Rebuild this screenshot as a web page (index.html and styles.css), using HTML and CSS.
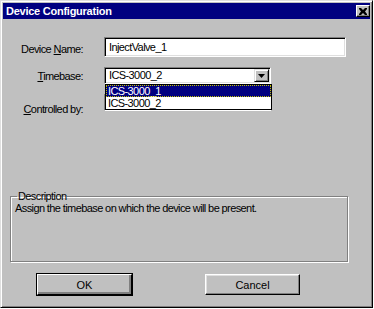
FILE: index.html
```html
<!DOCTYPE html>
<html lang="en">
<head>
    <meta charset="UTF-8">
    <title>Device Configuration</title>
    <link rel="stylesheet" href="styles.css">
</head>
<body>
<div class="window">
    <div class="titlebar">
        <span class="title">Device Configuration</span>
        <span class="close">
            <svg width="8" height="7" viewBox="0 0 8 7"><path d="M0 0h2l2 2 2-2h2v1L6 3.5 8 6v1H6L4 5 2 7H0V6l2-2.5L0 1z" fill="#000"/></svg>
        </span>
    </div>
    <div class="content">
        <div class="form">
            <div class="row">
                <label class="lbl lbl-name">Device <u>N</u>ame:</label>
                <div class="edit wide">InjectValve_1</div>
            </div>
            <div class="row">
                <label class="lbl lbl-time"><u>T</u>imebase:</label>
                <div class="combo">
                    <div class="combo-text">ICS-3000_2</div>
                    <span class="arrow"><svg width="7" height="4" viewBox="0 0 7 4"><path d="M0 0h7L3.5 4z" fill="#000"/></svg></span>
                    <ul class="droplist">
                        <li class="sel">ICS-3000_1</li>
                        <li>ICS-3000_2</li>
                    </ul>
                </div>
            </div>
            <div class="row">
                <label class="lbl lbl-ctrl"><u>C</u>ontrolled by:</label>
                <div class="combo">
                    <div class="combo-text"></div>
                    <span class="arrow"><svg width="7" height="4" viewBox="0 0 7 4"><path d="M0 0h7L3.5 4z" fill="#000"/></svg></span>
                </div>
            </div>
        </div>
        <fieldset class="desc">
            <legend>Description</legend>
            <p>Assign the timebase on which the device will be present.</p>
        </fieldset>
        <div class="buttons">
            <button class="btn default" type="button">OK</button>
            <button class="btn" type="button">Cancel</button>
        </div>
    </div>
</div>
</body>
</html>
```

FILE: styles.css
```css
body {
    margin: 0;
    font-family: "Liberation Sans", Arial, sans-serif;
    font-size: 11px;
    letter-spacing: -0.6px;
    color: #000;
}

.window {
    box-sizing: border-box;
    width: 373px;
    height: 308px;
    padding: 2px;
    background: #c0c0c0;
    border: 1px solid;
    border-color: #dfdfdf #000 #000 #dfdfdf;
    box-shadow: inset 1px 1px #fff, inset -1px -1px #808080;
    display: flex;
    flex-direction: column;
}

.titlebar {
    height: 16px;
    padding: 0 0 0 3px;
    background: #000080;
    color: #fff;
    display: flex;
    align-items: center;
    justify-content: space-between;
}

.title {
    font-weight: bold;
    letter-spacing: -0.25px;
}

.close {
    box-sizing: border-box;
    width: 14px;
    height: 12px;
    background: #c0c0c0;
    border: 1px solid;
    border-color: #fff #000 #000 #fff;
    box-shadow: inset -1px -1px #808080;
    display: flex;
    align-items: center;
    justify-content: center;
}

.content {
    flex: 1;
    padding: 18px 0 0 7px;
    display: flex;
    flex-direction: column;
}

.form {
    display: flex;
    flex-direction: column;
    gap: 10px;
}

.row {
    display: flex;
    align-items: flex-start;
}

.lbl {
    width: 73px;
    margin-right: 21px;
    line-height: 13px;
    text-align: right;
}

.lbl-name {
    margin-top: 6px;
}

.lbl-time {
    margin-top: 3px;
}

.lbl-ctrl {
    margin-top: 9px;
}

.edit,
.combo {
    box-sizing: border-box;
    height: 20px;
    background: #fff;
    border: 1px solid;
    border-color: #808080 #fff #fff #808080;
    box-shadow: inset 1px 1px #000, inset -1px -1px #dfdfdf;
}

.edit {
    padding: 3px 4px;
    line-height: 13px;
}

.wide {
    width: 242px;
}

.combo {
    width: 167px;
    height: 17px;
    position: relative;
    display: flex;
}

.combo-text {
    flex: 1;
    padding: 1px 4px;
    line-height: 13px;
}

.arrow {
    box-sizing: border-box;
    width: 15px;
    height: 13px;
    margin: 1px 1px 0 0;
    background: #c0c0c0;
    border: 1px solid;
    border-color: #dfdfdf #000 #000 #dfdfdf;
    box-shadow: inset 1px 1px #fff, inset -1px -1px #808080;
    display: flex;
    align-items: center;
    justify-content: center;
}

.droplist {
    position: absolute;
    top: 16px;
    left: 0;
    z-index: 2;
    box-sizing: border-box;
    width: 167px;
    margin: 0;
    padding: 0;
    list-style: none;
    background: #fff;
    border: 1px solid #000;
}

.droplist li {
    height: 12px;
    padding: 0 2px;
    line-height: 12px;
}

.droplist .sel {
    background: #000080;
    color: #fff;
    outline: 1px dotted #c0c000;
    outline-offset: -1px;
}

.desc {
    width: 338px;
    height: 72px;
    box-sizing: border-box;
    margin: 74px 0 0 0;
    padding: 0 4px;
    border: 1px solid #808080;
    box-shadow: 1px 1px #fff, inset 1px 1px #fff;
}

.desc legend {
    margin-left: 2px;
    padding: 0 1px;
}

.desc p {
    margin: 0;
}

.buttons {
    display: flex;
    gap: 73px;
    margin: 12px 0 0 27px;
}

.btn {
    box-sizing: border-box;
    width: 95px;
    height: 21px;
    padding: 0;
    font: inherit;
    background: #c0c0c0;
    border: 1px solid;
    border-color: #fff #000 #000 #fff;
    box-shadow: inset -1px -1px #808080, inset 1px 1px #dfdfdf;
}

.btn.default {
    outline: 1px solid #000;
    outline-offset: 0;
    border-color: #fff #000 #000 #fff;
    box-shadow: inset -2px -2px #808080;
}
```
